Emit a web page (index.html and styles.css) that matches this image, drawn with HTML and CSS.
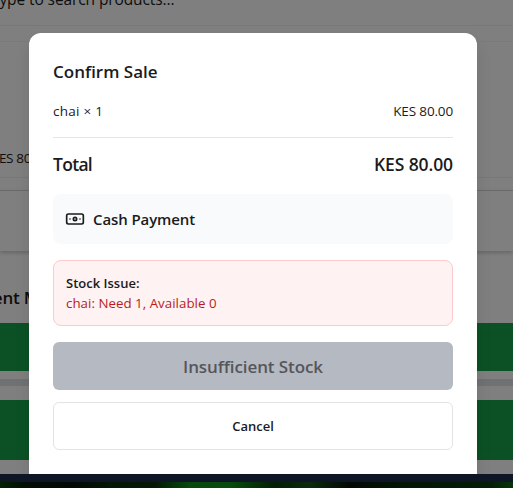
FILE: index.html
```html
<!DOCTYPE html>
<html lang="en">
<head>
<meta charset="utf-8">
<title>Confirm Sale</title>
<link rel="stylesheet" href="styles.css">
</head>
<body>
<div class="screen">
  <main class="page">
    <div class="search"><span>Type to search products...</span></div>
    <div class="gap"></div>
    <div class="products"><span>KES 80.00</span></div>
    <div class="spacer"></div>
    <div class="cart"></div>
    <h3 class="method">Payment Method</h3>
    <div class="pay"></div>
    <div class="track"></div>
    <div class="checkout"></div>
  </main>
  <div class="overlay">
    <section class="dialog" role="dialog">
      <h2 class="title"><span>Confirm Sale</span></h2>
      <div class="line"><span class="item">chai × 1</span><span class="price">KES 80.00</span></div>
      <div class="total"><span class="total-label">Total</span><span class="total-price">KES 80.00</span></div>
      <div class="cash">
        <svg width="20" height="20" viewBox="0 0 24 24" fill="none" stroke="currentColor" stroke-width="2" stroke-linecap="round" stroke-linejoin="round"><rect width="20" height="12" x="2" y="6" rx="2"/><circle cx="12" cy="12" r="2"/><path d="M6 12h.01M18 12h.01"/></svg>
        <span>Cash Payment</span>
      </div>
      <div class="alert"><strong>Stock Issue:</strong><span>chai: Need 1, Available 0</span></div>
      <button class="submit" disabled><span>Insufficient Stock</span></button>
      <button class="cancel"><span>Cancel</span></button>
    </section>
  </div>
</div>
<div class="taskbar"></div>
<div class="wallpaper"></div>
</body>
</html>
```
FILE: styles.css
```css
* { box-sizing: border-box; }
body {
  margin: 0;
  height: 488px;
  overflow: hidden;
  display: flex;
  flex-direction: column;
  font-family: "Open Sans", "Noto Sans", sans-serif;
  font-size: 13.5px;
  color: #1b1b1d;
}
h2, h3 { margin: 0; font-weight: 600; }
span, strong { white-space: nowrap; }
.screen { position: relative; height: 474px; overflow: hidden; }
.page { height: 474px; background: #fff; display: flex; flex-direction: column; }
.search { height: 26px; border-bottom: 1px solid #f0f0f0; font-size: 15.5px; line-height: 22px; }
.search span { display: block; margin: -12px 0 0 -9px; letter-spacing: -.1px; }
.gap { height: 16px; border-bottom: 1px solid #f3f4f6; }
.products { height: 136px; border-bottom: 1px solid #f0f0f0; padding-top: 106px; line-height: 20px; }
.products span { display: block; margin-left: -9px; letter-spacing: -.35px; }
.spacer { height: 12px; }
.cart { height: 61px; border-top: 1px solid #d4d4d8; box-shadow: 0 2px 4px rgba(0, 0, 0, .2); }
.method { height: 72px; margin-left: -52px; padding-top: 35px; font-size: 17px; line-height: 24px; letter-spacing: -.2px; }
.pay { height: 48px; background: #19a34b; }
.track { height: 7px; margin: 8px 0 14px; background: #e1e3e6; }
.checkout { height: 60px; background: #19a34b; }
.overlay { position: absolute; inset: 0; background: rgba(0, 0, 0, .5); padding: 33px 36px 0 29px; }
.dialog {
  height: 460px;
  padding: 24px;
  background: #fff;
  border-radius: 12px;
  box-shadow: 0 10px 15px rgba(0, 0, 0, .1);
}
.title { height: 28px; font-size: 17px; line-height: 29px; }
.line, .total { display: flex; justify-content: space-between; }
.line { height: 53px; padding-top: 16px; line-height: 20px; border-bottom: 1px solid #e5e5e5; }
.price { letter-spacing: -.15px; }
.item { letter-spacing: .25px; }
.total { height: 56px; padding-top: 12px; font-size: 17.5px; font-weight: 600; line-height: 28px; }
.total-label { letter-spacing: -.7px; }
.total-price { letter-spacing: -.1px; }
.cash {
  height: 50px;
  padding: 0 12px;
  display: flex;
  align-items: center;
  gap: 8px;
  background: #f9fafb;
  border-radius: 8px;
  font-size: 15px;
  font-weight: 600;
  letter-spacing: -.1px;
}
.alert {
  height: 66px;
  margin-top: 16px;
  padding: 12px;
  display: flex;
  flex-direction: column;
  background: #fef2f2;
  border: 1px solid #fecaca;
  border-radius: 8px;
  font-size: 13px;
  line-height: 20px;
}
.alert strong { font-weight: 600; }
.alert span { color: #b91c1c; font-size: 13.3px; letter-spacing: .03px; }
button {
  display: block;
  width: 100%;
  height: 48px;
  padding: 0;
  border-radius: 6px;
  font-family: inherit;
  font-weight: 600;
}
.submit { margin-top: 16px; border: 0; background: #b5b9c2; color: #555659; font-size: 17px; letter-spacing: -.1px; }
.cancel { margin-top: 12px; border: 1px solid #e3e3e5; background: #fff; color: #1b1b1d; font-size: 13px; }
.taskbar { height: 8px; background: #0e1524; }
.wallpaper {
  height: 6px;
  background: linear-gradient(90deg, #032005 0, #020d04 25px, #020804 75px, #021705 110px, #031905 155px, #07480c 190px, #084c0d 230px, #031d06 275px, #092b0d 310px, #020804 350px, #021605 400px, #031d06 490px, #053408 513px);
}
```
